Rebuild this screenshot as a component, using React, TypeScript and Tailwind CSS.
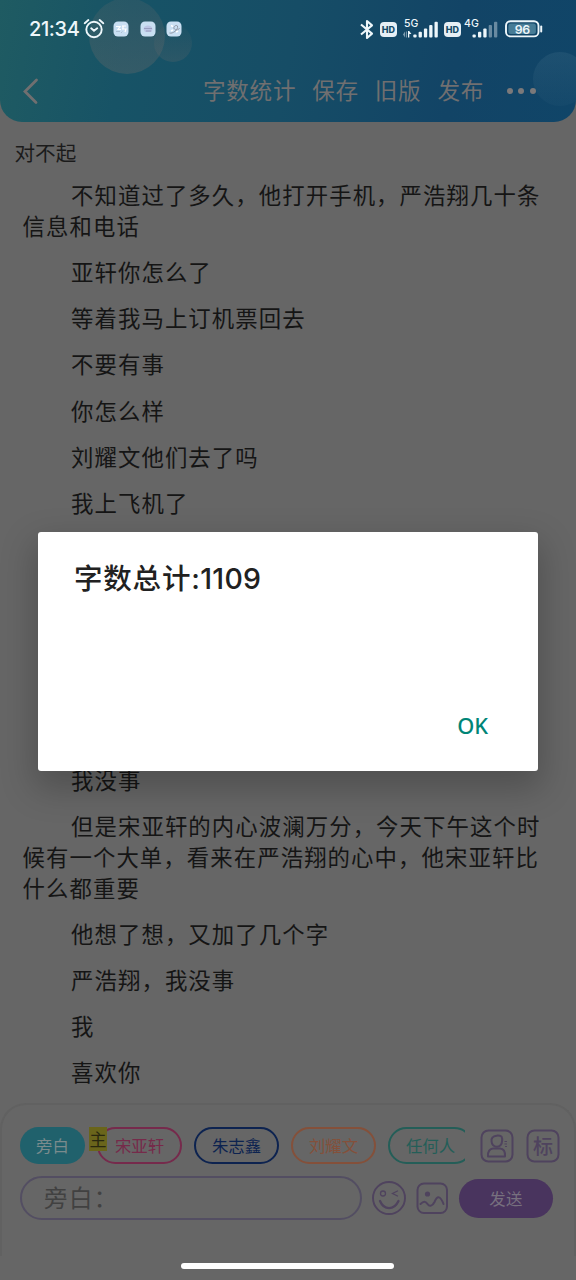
import type { ReactNode } from "react";
import clsx from "clsx";

const storyTop = [
	["不知道过了多久，他打开手机，严浩翔几十条", "信息和电话"],
	["亚轩你怎么了"],
	["等着我马上订机票回去"],
	["不要有事"],
	["你怎么样"],
	["刘耀文他们去了吗"],
	["我上飞机了"],
];

const storyBottom = [
	["我没事"],
	["但是宋亚轩的内心波澜万分，今天下午这个时", "候有一个大单，看来在严浩翔的心中，他宋亚轩比", "什么都重要"],
	["他想了想，又加了几个字"],
	["严浩翔，我没事"],
	["我"],
	["喜欢你"],
];

const roles = [
	{ name: "宋亚轩", style: "border-[#762a4c] text-[#762a4a]", main: true },
	{ name: "朱志鑫", style: "border-[#0d2350] text-[#0d2350]" },
	{ name: "刘耀文", style: "border-[#84503a] text-[#84503a]" },
	{ name: "任何人", style: "border-[#245e58] text-[#245e58]" },
];

function Story({ list }: { list: string[][] }) {
	return (
		<div className="flex flex-col gap-[15.2px] pl-[22.5px] text-[22.4px] leading-[30.9px] tracking-[1.08px] whitespace-nowrap text-[#151515]">
			{list.map((lines) => (
				<p key={lines[0]}>
					{lines.map((line) => (
						<span key={line} className="block indent-0 first:indent-[48.5px]">
							{line}
						</span>
					))}
				</p>
			))}
		</div>
	);
}

function HdBadge() {
	return (
		<span className="flex h-[15px] w-[17px] items-center justify-center rounded-[4px] bg-[#e6eff5] font-['Inter'] text-[9px] leading-none font-extrabold text-[#144a66]">
			HD
		</span>
	);
}

function AppBadge({ children }: { children: ReactNode }) {
	return (
		<svg width="16" height="16" viewBox="0 0 16 16" fill="none">
			<rect x=".5" y=".5" width="15" height="15" rx="4.5" fill="#c9dff2" />
			{children}
		</svg>
	);
}

function StatusBar() {
	return (
		<div className="flex h-[58px] items-center pl-[29px] text-[#edf6fa]">
			<span className="w-[53px] font-['Inter'] text-[20px] font-medium tracking-[-0.4px]">21:34</span>
			<svg className="ml-px" width="22" height="22" viewBox="0 0 22 22" fill="none" stroke="currentColor" strokeWidth="1.9" strokeLinecap="round">
				<circle cx="11" cy="11.5" r="7.7" />
				<path d="M1.7 5.2 5.4 2M20.3 5.2 16.6 2M8.2 10.3l2.8 2.4 3.2-2.4" />
			</svg>
			<div className="ml-[8px] flex gap-[10.7px]">
				<AppBadge>
					<path d="M3 5.5h4L5 8.5h3M9 5h4M10 5v3M9 8h4l-1 3" stroke="#fff" strokeWidth="1.2" />
					<path d="M3 10.5h4M9.5 10.5 8 12" stroke="#a5b8cc" strokeWidth=".8" />
				</AppBadge>
				<AppBadge>
					<path d="M3.5 8c0-4 8-5 9 0l-1 3H5z" fill="#bcc5e4" />
					<path d="M4 7.5h8M6 10h5" stroke="#8f94b5" strokeWidth=".8" />
				</AppBadge>
				<AppBadge>
					<path d="M3.5 12c3 1 9-3 8-7-2-2-5 2-3 3 2 2 4 1 5-1" stroke="#8f96a4" />
					<path d="m5 4.5 2 1M5 10l2-1M10 11l2-1" stroke="#fff" strokeWidth="1.4" />
				</AppBadge>
			</div>
			<svg className="ml-[177.6px] shrink-0" width="14" height="21" viewBox="0 0 14 21" fill="none" stroke="currentColor" strokeWidth="2.1" strokeLinejoin="round">
				<path d="M1 5.5 12 14.6 7 19V2l5 4.4L1 15.5" />
			</svg>
			<div className="ml-[6px]">
				<HdBadge />
			</div>
			<svg className="ml-[6.5px] shrink-0" width="36" height="28" viewBox="0 -4 36 28" fill="currentColor">
				<text x="1" y="8.3" fontFamily="Inter" fontSize="10.5" fontWeight="500">5G</text>
				<path d="m0 15.5 2-3v6zM2.9 12.5h1v6h-1z" opacity=".5" />
				<path d="M5 12h1.2l2.2 3H6.3v3.5H5z" />
				<rect x="10.3" y="15.5" width="3.3" height="3" rx="1" />
				<rect x="15.6" y="12.8" width="3.3" height="5.7" rx="1" />
				<rect x="20.9" y="9.5" width="3.3" height="9" rx="1" />
				<rect x="26.2" y="5.9" width="3.3" height="12.6" rx="1" />
				<rect x="31.5" y="2.8" width="3.3" height="15.7" rx="1" />
			</svg>
			<div className="ml-[4.5px]">
				<HdBadge />
			</div>
			<svg className="ml-[3px] shrink-0" width="36" height="28" viewBox="0 -4 36 28" fill="currentColor">
				<text x="0" y="8.3" fontFamily="Inter" fontSize="10.5" fontWeight="500">4G</text>
				<rect x="8.5" y="15.5" width="3.3" height="3" rx="1" />
				<rect x="14" y="12.8" width="3.3" height="5.7" rx="1" />
				<rect x="19.3" y="9.5" width="3.3" height="9" rx="1" />
				<rect x="24.7" y="5.9" width="3.3" height="12.6" rx="1" opacity=".4" />
				<rect x="30" y="2.8" width="3.3" height="15.7" rx="1" opacity=".4" />
			</svg>
			<svg className="ml-[5px] shrink-0" width="38" height="18" viewBox="0 0 38 18" fill="none">
				<rect x="1" y="1.2" width="32.5" height="15.2" rx="4.5" stroke="currentColor" strokeWidth="1.9" />
				<rect x="3.4" y="3.6" width="27.5" height="10.4" rx="2.5" fill="#477c96" />
				<path d="M36.2 6.5v5" stroke="currentColor" strokeWidth="2" strokeLinecap="round" />
				<text x="17.2" y="13.5" textAnchor="middle" fill="currentColor" fontFamily="Inter" fontSize="12.3" fontWeight="600" letterSpacing="-.4">96</text>
			</svg>
		</div>
	);
}

function Header() {
	return (
		<header className="relative h-[122px] overflow-hidden rounded-b-[22px] bg-[linear-gradient(100deg,#1f5b62_0%,#175366_22%,#164d66_50%,#124466_78%,#104568_100%)]">
			<div className="absolute top-[-2px] left-[89px] size-[76px] rounded-full bg-linear-to-t from-[#6a6a6a]/35 to-[#6a6a6a]/20" />
			<div className="absolute top-[24px] left-[154px] size-[38px] rounded-full bg-linear-to-t from-[#6a6a6a]/25 to-[#6a6a6a]/5" />
			<div className="absolute top-[52px] left-[533px] size-[54px] rounded-full bg-linear-to-b from-[#3c6a85]/30 to-[#3c6a85]/10" />
			<div className="relative">
				<StatusBar />
				<div className="flex h-[65px] items-center text-[22.6px] tracking-[0.7px] text-[#706f70]">
					<svg className="ml-[22px]" width="18" height="28" viewBox="0 0 18 28" fill="none" stroke="currentColor" strokeWidth="2.8" strokeLinecap="round">
						<path d="M14.5 3 3 14.5l11 11" />
					</svg>
					<div className="-mt-px ml-[163px] flex gap-[16px] leading-[32px] whitespace-nowrap">
						<span>字数统计</span>
						<span>保存</span>
						<span>旧版</span>
						<span>发布</span>
					</div>
					<div className="ml-[23px] flex gap-[5.5px]">
						<i className="size-[6px] rounded-full bg-[#7b797a]" />
						<i className="size-[6px] rounded-full bg-[#7b797a]" />
						<i className="size-[6px] rounded-full bg-[#7b797a]" />
					</div>
				</div>
			</div>
		</header>
	);
}

function Composer() {
	return (
		<section className="h-[153px] rounded-t-[26px] border-2 border-b-0 border-[#616161] px-[18px] pt-[22px] text-[16.4px]">
			<div className="flex h-[37px] items-center">
				<div className="relative flex w-[445px] shrink-0 gap-[12px] overflow-hidden whitespace-nowrap">
					<span className="flex h-[37px] w-[65px] shrink-0 items-center justify-center rounded-full bg-[#20616c] text-[#7a8b8d]">旁白</span>
					{roles.map((role) => (
						<div key={role.name} className="relative shrink-0">
							<span className={clsx("flex h-[37px] w-[85px] items-center justify-center rounded-full border-2", role.style)}>{role.name}</span>
							{role.main && (
								<b className="absolute top-0 -left-[8px] h-[24px] w-[18px] bg-[#6a651b] text-center text-[17px] leading-[23px] font-normal text-[#29280f]">主</b>
							)}
						</div>
					))}
				</div>
				<svg className="ml-[15px] shrink-0" width="34" height="34" viewBox="0 0 34 34" fill="none" stroke="#4f435e" strokeWidth="2">
					<rect x="1.5" y="1.5" width="31" height="31" rx="7" />
					<path d="M12.5 8.5C14 6.5 19 6 21.5 7.5c.8 1.5.8 3.5.5 5a5.2 5.2 0 0 1-10.4 0c-.3-1.5 0-3 .9-4z" strokeLinejoin="round" />
					<path d="M8 27.5c-.5-5 2-8 5-8h7c3.5 0 5.5 3 5 8z" strokeLinejoin="round" />
					<path d="M24.5 12.5h2.5M24.5 15h2.5M25 17.5h2" strokeWidth="1" />
				</svg>
				<svg className="ml-[12px] shrink-0" width="34" height="34" viewBox="0 0 34 34" fill="none">
					<rect x="1.5" y="1.5" width="31" height="31" rx="7" stroke="#4f435e" strokeWidth="2" />
					<text x="17" y="24.5" textAnchor="middle" fill="#4f435e" fontSize="20" fontWeight="500">标</text>
				</svg>
			</div>
			<div className="mt-[12px] flex items-center">
				<div className="flex h-[44px] w-[342px] shrink-0 items-center rounded-full border-2 border-[#534e62] pl-[22px] text-[23.5px] tracking-[1.4px] text-[#414141]">旁白：</div>
				<svg className="ml-[9px] shrink-0" width="36" height="36" viewBox="0 0 36 36" fill="none" stroke="#4f435e" strokeWidth="1.9" strokeLinecap="round">
					<circle cx="18" cy="18" r="16" />
					<circle cx="12" cy="13.5" r="2.5" strokeWidth="1.3" />
					<path d="m26.5 11-5 2.5 5 2.5" strokeWidth="1.3" />
					<path d="M9 21c4 9.5 14 9.5 18.5 0" strokeWidth="2.3" />
				</svg>
				<svg className="ml-[9px] shrink-0" width="34" height="34" viewBox="0 0 34 34" fill="none" stroke="#4f435e" strokeWidth="2" strokeLinecap="round">
					<rect x="1.5" y="2.5" width="29.5" height="29.5" rx="6.5" />
					<circle cx="11.5" cy="13" r="2.6" fill="#4f435e" stroke="none" />
					<path d="M4.5 23c3-3 5-3 7 0s5 2 7-2c3-7 6-6 9 2" />
				</svg>
				<span className="ml-[9px] flex h-[39px] w-[94px] shrink-0 items-center justify-center rounded-full bg-[#49345e] tracking-[0.3px] text-[#77707e]">发送</span>
			</div>
		</section>
	);
}

export default function App() {
	return (
		<main className="relative flex h-[1280px] w-[576px] flex-col overflow-hidden bg-[#666] font-['Noto_Sans_CJK_SC',sans-serif]">
			<Header />
			<div className="h-[57.3px] shrink-0 pt-[15px] pl-[14.5px] text-[20.6px] leading-[30px] text-[#1b1b1b]">对不起</div>
			<Story list={storyTop} />
			<div className="h-[246px] shrink-0" />
			<Story list={storyBottom} />
			<div className="mt-auto">
				<Composer />
				<div className="h-[24px] pt-[7px]">
					<div className="ml-[181px] h-[6px] w-[213px] rounded-full bg-white" />
				</div>
			</div>
			<div className="absolute top-[532px] left-[38px] flex h-[239px] w-[500px] flex-col justify-between rounded-[3px] bg-white shadow-[0_14px_34px_4px_rgba(0,0,0,0.22)]">
				<h2 className="pt-[26px] pl-[36px] font-['Inter','Noto_Sans_CJK_SC',sans-serif] text-[28.5px] leading-[42px] font-medium whitespace-nowrap text-[#212121]">
					<span className="tracking-[0.8px]">字数总计</span>
					<span className="tracking-[0.3px]">:1109</span>
				</h2>
				<button className="mr-[50px] mb-[30px] self-end font-['Noto_Sans',sans-serif] text-[21.8px] leading-[30px] font-medium text-[#008577]">OK</button>
			</div>
		</main>
	);
}
